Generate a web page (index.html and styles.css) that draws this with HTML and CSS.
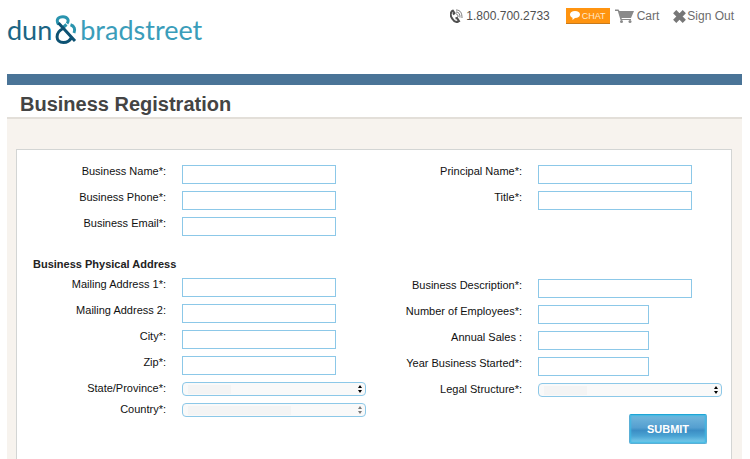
FILE: index.html
```html
<!DOCTYPE html>
<html lang="en">
<head>
  <meta charset="UTF-8" />
  <meta name="viewport" content="width=device-width, initial-scale=1" />
  <title>Business Registration</title>
  <link rel="stylesheet" href="styles.css">
</head>
<body>

  <header class="site-header">
    <a class="logo" href="#" aria-label="dun &amp; bradstreet">
      <span class="logo-dun">dun</span>
      <svg class="logo-amp" viewBox="0 0 22 30" fill="none" stroke-width="3">
        <path d="M3.500 9.500C0.500 4.500 3.500 1.700 8 1.700C12.500 1.700 14.500 5.500 12 8.500" stroke="#2a94ae" />
        <path d="M11.500 9.500L7.500 13" stroke="#2a94ae" />
        <path d="M15.500 9.800C19.500 11 20.500 14.500 19 18" stroke="#2a94ae" />
        <path d="M8 13.500C0 17.500 0 27.500 8.500 27.500C12.500 27.500 15 25.500 16.500 22.500M3.500 8L20 26" stroke="#0d5273" />
      </svg>
      <span class="logo-brad">bradstreet</span>
    </a>

    <nav class="top-links">
      <a class="phone" href="tel:18007002733">
        <svg width="13" height="14" viewBox="0 0 13 14" fill="none">
          <path d="M3 1.500C0 3 0 7 2.500 10C4 12.500 6 13.500 8 12.500" stroke="#505050" stroke-width="2" />
          <path d="M2.500 1L4.500 4L3 5.500M5.500 9.500L7 9L9 12L7 13" stroke="#505050" stroke-width="2" />
          <path d="M6 5C7.500 5 8 6 8 8M6 3C9 3 10 5 10 8.500M6 1C10.500 1 12 4 12 9" stroke="#777" />
        </svg>
        1.800.700.2733
      </a>
      <button class="chat" type="button">
        <svg width="10" height="9" viewBox="0 0 10 9">
          <path d="M5 0C2 0 0 1.500 0 3.500C0 5 1 6.200 2.500 6.700L2.500 9L5 7C8 7 10 5.500 10 3.500C10 1.500 8 0 5 0Z" fill="#fff" />
        </svg>
        CHAT
      </button>
      <a class="cart" href="#">
        <svg width="19" height="14" viewBox="0 0 19 14" fill="#8a8a8a">
          <path d="M0 0.500H3.500L4.500 2H19L16 9H6.500L6.800 10H16V11H5.500L2.800 2H0Z" />
          <circle cx="6.500" cy="12.500" r="1.500" />
          <circle cx="15" cy="12.500" r="1.500" />
        </svg>
        Cart
      </a>
      <a class="sign-out" href="#">
        <svg width="13" height="13" viewBox="0 0 13 13" stroke="#777" stroke-width="4.500">
          <path d="M1.700 1.700L11.300 11.300M11.300 1.700L1.700 11.300" />
        </svg>
        Sign Out
      </a>
    </nav>
  </header>

  <h1>Business Registration</h1>

  <main>
    <form class="panel">
      <div class="columns">
        <div class="column">
          <div class="row">
            <label for="businessName">Business Name*:</label>
            <input type="text" id="businessName" name="businessName" />
          </div>
          <div class="row">
            <label for="businessPhone">Business Phone*:</label>
            <input type="text" id="businessPhone" name="businessPhone" />
          </div>
          <div class="row">
            <label for="businessEmail">Business Email*:</label>
            <input type="text" id="businessEmail" name="businessEmail" />
          </div>
        </div>
        <div class="column">
          <div class="row">
            <label for="principalName">Principal Name*:</label>
            <input type="text" id="principalName" name="principalName" />
          </div>
          <div class="row">
            <label for="title">Title*:</label>
            <input type="text" id="title" name="title" />
          </div>
        </div>
      </div>

      <!-- Address and company details -->
      <div class="columns">
        <div class="column">
          <h2>Business Physical Address</h2>
          <div class="row">
            <label for="address1">Mailing Address 1*:</label>
            <input type="text" id="address1" name="address1" />
          </div>
          <div class="row">
            <label for="address2">Mailing Address 2:</label>
            <input type="text" id="address2" name="address2" />
          </div>
          <div class="row">
            <label for="city">City*:</label>
            <input type="text" id="city" name="city" />
          </div>
          <div class="row">
            <label for="zip">Zip*:</label>
            <input type="text" id="zip" name="zip" />
          </div>
          <div class="row">
            <label for="state">State/Province*:</label>
            <div class="select-wrap">
              <select id="state" name="state"><option value=""></option></select>
              <svg class="arrows" viewBox="0 0 4 8"><path d="M0 3L2 0L4 3ZM0 5L2 8L4 5Z" /></svg>
            </div>
          </div>
          <div class="row">
            <label for="country">Country*:</label>
            <div class="select-wrap">
              <select id="country" class="country" name="country"><option value=""></option></select>
              <svg class="arrows muted" viewBox="0 0 4 8"><path d="M0 3L2 0L4 3ZM0 5L2 8L4 5Z" /></svg>
            </div>
          </div>
        </div>
        <div class="column details">
          <div class="row">
            <label for="description">Business Description*:</label>
            <input type="text" id="description" name="description" />
          </div>
          <div class="row">
            <label for="employees">Number of Employees*:</label>
            <input type="text" id="employees" class="short" name="employees" />
          </div>
          <div class="row">
            <label for="sales">Annual Sales :</label>
            <input type="text" id="sales" class="short" name="sales" />
          </div>
          <div class="row">
            <label for="yearStarted">Year Business Started*:</label>
            <input type="text" id="yearStarted" class="short" name="yearStarted" />
          </div>
          <div class="row">
            <label for="legal">Legal Structure*:</label>
            <div class="select-wrap">
              <select id="legal" name="legal"><option value=""></option></select>
              <svg class="arrows" viewBox="0 0 4 8"><path d="M0 3L2 0L4 3ZM0 5L2 8L4 5Z" /></svg>
            </div>
          </div>
          <button class="submit" type="submit">SUBMIT</button>
        </div>
      </div>
    </form>
  </main>

</body>
</html>
```

FILE: styles.css
```css
* {
  box-sizing: border-box;
}
body {
  display: flex;
  flex-direction: column;
  min-height: 100vh;
  margin: 0;
  padding: 0 8px 0 7px;
  font-family: "Liberation Sans", Arial, sans-serif;
  font-size: 11px;
  color: #111;
  background: #fff;
}
a {
  color: inherit;
  text-decoration: none;
}

/* Header */
.site-header {
  display: flex;
  justify-content: space-between;
  align-items: flex-start;
  height: 74px;
}
.logo {
  display: flex;
  align-items: center;
  gap: 3px;
  padding-top: 15px;
  font-family: Lato, sans-serif;
  font-size: 27px;
  line-height: 30px;
}
.logo-dun {
  color: #1b6584;
}
.logo-brad {
  color: #3a9dba;
}
.logo-amp {
  width: 22px;
  height: 30px;
}
.top-links {
  display: flex;
  align-items: center;
  padding: 6px 8px 0 0;
  font-size: 12px;
  line-height: 20px;
  color: #6c6c6c;
}
.top-links a {
  display: flex;
  align-items: center;
  gap: 3px;
}
.top-links .phone {
  margin-right: 16px;
  color: #505050;
}
.chat {
  display: flex;
  align-items: center;
  gap: 2px;
  height: 16px;
  margin-right: 5px;
  padding: 0 4px;
  border: none;
  border-bottom: 1px solid #c87a1c;
  background: #ff9410;
  color: #ffe9cc;
  font-family: inherit;
  font-size: 9px;
  cursor: pointer;
}
.cart {
  margin-right: 14px;
}
.top-links .sign-out {
  gap: 1px;
}

h1 {
  margin: 0;
  padding: 7px 13px 0;
  height: 45px;
  border-top: 11px solid #4a7497;
  border-bottom: 2px solid #e3dfd9;
  font-size: 20px;
  line-height: 24px;
  color: #444;
}

/* Form */
main {
  display: flex;
  flex: 1;
  padding: 30px 10px 0 9px;
  background: #f7f3ee;
}
.panel {
  flex: 1;
  padding: 15px 2px 14px 0;
  border: 1px solid #d3d5d4;
  border-bottom: none;
  background: #fff;
}
.columns {
  display: grid;
  grid-template-columns: 1fr 1fr;
}
.columns + .columns {
  margin-top: 22px;
}
.column {
  display: flex;
  flex-direction: column;
  gap: 7px;
}
.details {
  padding-top: 21px;
}
h2 {
  margin: 0;
  padding-left: 16px;
  font-size: 11px;
  line-height: 13px;
  color: #222;
}
.row {
  display: flex;
  gap: 16px;
}
label {
  width: 149px;
  line-height: 13px;
  text-align: right;
}
input {
  width: 154px;
  height: 19px;
  padding: 0 4px;
  border: 1px solid #8cc8e8;
  background: #fff;
  font-family: inherit;
  font-size: 11px;
}
.short {
  width: 111px;
}
.select-wrap {
  position: relative;
  display: flex;
  width: 184px;
}
select {
  appearance: none;
  width: 100%;
  height: 14px;
  padding: 0 12px 0 5px;
  border: 1px solid #8cc8e8;
  border-radius: 4px;
  background: #f9f9f9 linear-gradient(#f4f4f4, #f4f4f4) no-repeat 5px 2px / 43px 9px;
  font-size: 9px;
}
.country {
  background-size: 103px 9px;
}
.arrows {
  position: absolute;
  top: 3px;
  right: 4px;
  width: 4px;
  height: 8px;
  pointer-events: none;
}
.muted {
  fill: #777;
}
.submit {
  align-self: flex-end;
  width: 78px;
  height: 30px;
  margin: 10px 22px 0 0;
  border: 1px solid #5aafd6;
  border-top-color: #1fa5d6;
  border-radius: 2px;
  background: linear-gradient(#74b8dd, #559fd0 45%, #3b8dc4 55%, #4aa3d3 75%, #7fd0ee);
  box-shadow: inset 0 0 2px 1px #3fb9e4;
  color: #fff;
  font-family: inherit;
  font-size: 11px;
  font-weight: bold;
  cursor: pointer;
}
```
